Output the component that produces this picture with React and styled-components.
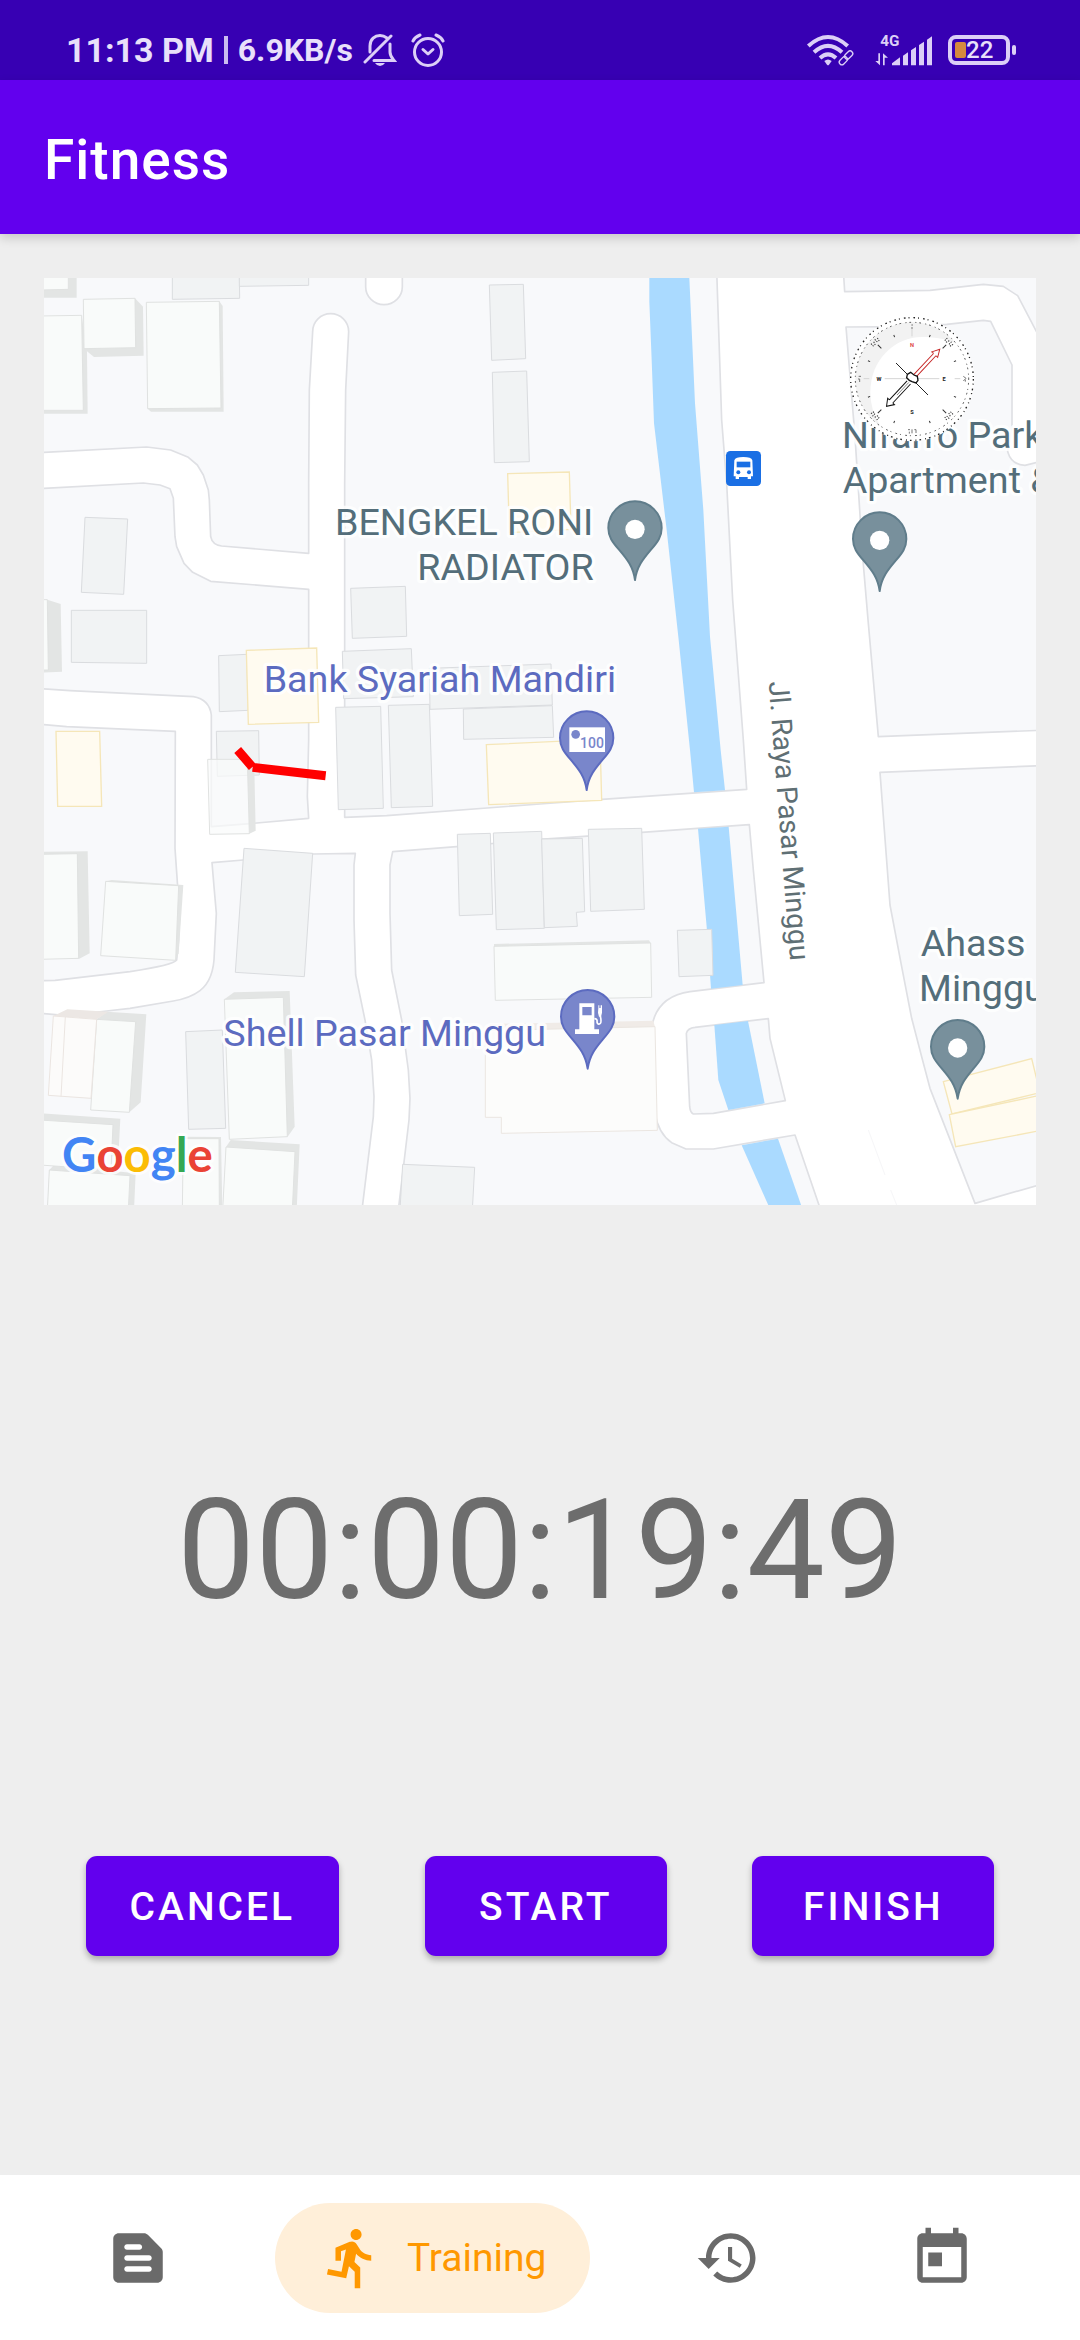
import React from "react";
import styled, { createGlobalStyle } from "styled-components";

const GlobalStyle = createGlobalStyle`
  *, *::before, *::after { box-sizing: border-box; }
  body {
    margin: 0;
    background: #eeeeee;
    font-family: Roboto, "Liberation Sans", sans-serif;
  }
`;

const Screen = styled.div`
  display: flex;
  flex-direction: column;
  min-height: 100vh;
`;

const StatusBar = styled.div`
  display: flex;
  justify-content: space-between;
  align-items: center;
  height: 80px;
  padding: 20px 64px 0 66px;
  background: #3700b3;
  color: #e9e0fa;
`;

const StatusGroup = styled.div`
  display: flex;
  align-items: center;
  gap: ${(p) => p.$gap}px;
`;

const Clock = styled.span`
  font-size: 34px;
  line-height: 40px;
  font-weight: 700;
`;

const Speed = styled.span`
  font-size: 32px;
  line-height: 40px;
  font-weight: 700;
`;

const Divider = styled.span`
  width: 4px;
  height: 28px;
  background: #cbbcf0;
`;

const StatusIcon = styled.svg`
  display: block;
  width: ${(p) => p.$w}px;
  height: ${(p) => p.$h}px;
  color: #dccff7;
  font-family: Roboto, sans-serif;
`;

const Battery = styled.div`
  display: flex;
  align-items: center;
  gap: 2px;
`;

const BatteryShell = styled.div`
  display: flex;
  align-items: center;
  width: 62px;
  height: 30px;
  padding-left: 3px;
  border: 4px solid #dccff7;
  border-radius: 8px;
  font-size: 24px;
  line-height: 24px;
  font-weight: 500;
`;

const BatteryLevel = styled.span`
  width: 11px;
  height: 16px;
  border-radius: 2px;
  background: #d58a3e;
`;

const BatteryTip = styled.span`
  width: 4px;
  height: 10px;
  border-radius: 2px;
  background: #dccff7;
`;

const AppBar = styled.header`
  display: flex;
  align-items: center;
  height: 154px;
  padding: 6px 44px 0;
  background: #6200ee;
  color: #ffffff;
  box-shadow: 0 4px 10px rgba(0, 0, 0, 0.16);
`;

const Title = styled.h1`
  margin: 0;
  font-size: 55px;
  line-height: 64px;
  font-weight: 500;
  letter-spacing: 1px;
`;

const Main = styled.main`
  flex: 1;
  display: flex;
  flex-direction: column;
  padding: 44px 0;
`;

const MapView = styled.section`
  margin: 0 44px;
`;

const MapCanvas = styled.svg`
  display: block;
  width: 100%;
  height: auto;
  font-family: Roboto, "Liberation Sans", sans-serif;
`;

const Timer = styled.div`
  margin-top: 265px;
  text-align: center;
  font-size: 139px;
  line-height: 162px;
  color: #6d6d6d;
`;

const Actions = styled.div`
  display: flex;
  justify-content: space-evenly;
  margin-top: 224px;
`;

const ActionButton = styled.button`
  min-width: 242px;
  height: 100px;
  padding: 2px 44px 0;
  border: 0;
  border-radius: 11px;
  background: #6200ee;
  color: #ffffff;
  font: 500 39px/44px Roboto, "Liberation Sans", sans-serif;
  letter-spacing: 3px;
  box-shadow: 0 4px 6px rgba(0, 0, 0, 0.28);
`;

const BottomNav = styled.nav`
  display: flex;
  justify-content: space-evenly;
  align-items: center;
  height: 165px;
  background: #ffffff;
`;

const NavItem = styled.a`
  display: flex;
  align-items: center;
  gap: 22px;
  height: 110px;
  padding: 0 44px;
  border-radius: 55px;
  background: ${(p) => (p.$active ? "#ffefd9" : "transparent")};
  color: ${(p) => (p.$active ? "#ff9800" : "#6a6a6a")};
  font-size: 39px;
  line-height: 44px;
  text-decoration: none;
`;

const NavIcon = styled.svg`
  display: block;
  width: 66px;
  height: 66px;
  fill: currentColor;
`;

/* Map geometry, three units to a screen pixel. */

const land = [
  "M0 548 L320 531 L392 540 L445 562 L472 585 L490 615 L505 660 L508 690 L512 800 Q517 825 545 828 L806 850 V640 L808 360 L818 185 A54 54 0 0 1 926 185 L917 360 L914 640 V1642 L1040 1637 L1500 1602 L1686 1588 L2120 1558 L2110 1410 L2078 990 L2060 640 L2045 450 L2030 0 H1087 V50 A55 54 0 0 1 977 50 V0 H0Z",
  "M0 656 L310 639 L360 645 L390 656 L400 685 L405 800 L410 830 L432 880 L458 907 L512 934 L806 958 V1410 L802 1580 L806 1645 L640 1660 L514 1670 V1335 Q508 1288 460 1280 L90 1262 L0 1256Z",
  "M0 1363 L80 1370 L406 1384 L405 1735 L413 1850 Q424 1960 410 2070 Q400 2085 270 2105 L45 2131 L0 2132Z",
  "M516 1778 L610 1770 L820 1752 L946 1750 L942 1785 V1950 L947 2115 L975 2250 L995 2370 L1002 2480 L1000 2540 L966 2820 H0 V2230 L80 2237 L200 2223 L270 2215 L400 2193 Q450 2185 480 2162 Q522 2130 523 2050 L529 1930 L522 1850Z",
  "M1058 1745 L1050 1785 V1930 L1055 2100 L1085 2250 L1105 2400 L1110 2485 L1107 2550 L1075 2820 H2342 L2265 2595 L2020 2637 H1938 L1895 2618 Q1855 2590 1845 2530 L1835 2390 L1832 2290 Q1842 2180 1950 2165 L2172 2138 L2140 1800 L2128 1664 L1806 1687 L1500 1708 L1250 1730Z",
  "M1939 2290 Q1943 2274 1965 2272 L2185 2246 L2190 2305 L2236 2492 L2020 2530 L1960 2532 Q1951 2528 1949 2510Z",
  "M2410 0 L2414 65 L2670 61 L2830 43 L2890 49 L2933 77 L3000 205 V0Z",
  "M2418 171 L2600 170 L2720 163 L2830 151 L2852 154 L2916 285 V470 L2903 545 Q2915 585 2955 586 L3000 575 V1381 L2515 1400 L2485 1060 L2468 860 L2445 500Z",
  "M2520 1507 L3000 1487 V2744 L2805 2800 L2670 2455 L2645 2360 L2615 2245 L2585 2090 L2550 1905Z",
];

const water = [
  "1828,24 1828,95 1835,270 1842,460 1880,780 1915,1100 1950,1440 1962,1567 2055,1561 2042,1440 2010,1100 1990,720 1965,400 1948,24",
  "1974,1676 2066,1670 2108,2145 2013,2156 2000,1970",
  "2023,2265 2124,2253 2174,2500 2065,2520 2035,2430",
  "2105,2626 2214,2606 2285,2810 2187,2810",
];

const flatBuildings = [
  "397,0 598,0 599,85 397,88",
  "598,0 806,0 806,46 598,49",
  "1348,45 1450,43 1457,266 1355,271",
  "1357,307 1460,303 1468,575 1363,578",
  "135,742 263,747 251,973 124,967",
  "94,1021 320,1021 320,1180 94,1177",
  "932,955 1096,949 1100,1099 937,1105",
  "536,1157 620,1153 625,1321 538,1325",
  "907,1144 1114,1136 1120,1280 911,1286",
  "1168,1195 1533,1182 1537,1305 1170,1318",
  "1270,1317 1537,1307 1541,1402 1271,1408",
  "887,1312 1022,1309 1030,1615 895,1619",
  "1045,1306 1168,1303 1178,1609 1054,1613",
  "529,1384 656,1382 658,1515 532,1519",
  "612,1735 818,1750 793,2120 586,2107",
  "437,2285 547,2280 557,2575 446,2578",
  "1252,1693 1351,1690 1358,1933 1258,1937",
  "1360,1689 1505,1684 1513,1975 1369,1979",
  "1505,1707 1627,1705 1634,1925 1609,1927 1612,1969 1513,1973",
  "1645,1678 1805,1675 1813,1918 1652,1924",
  "1912,1981 2015,1978 2019,2116 1917,2120",
  "1088,2683 1304,2692 1297,2820 1080,2820",
];

const shops = [
  "619,1141 830,1134 836,1357 625,1363",
  "1403,611 1588,606 1593,778 1408,788",
  "48,1384 179,1384 185,1609 53,1609",
  "1339,1424 1680,1408 1685,1591 1346,1604",
  "2710,2435 2975,2366 3000,2468 2736,2532",
  "2728,2534 3000,2476 3000,2582 2747,2630",
];

const walls = [
  "0,0 110,0 110,83 0,83",
  "285,85 309,110 311,257 162,261 132,236",
  "538,94 548,108 551,425 333,425 323,416",
  "125,136 141,245 143,431 0,431 0,421",
  "22,989 62,1002 66,1205 0,1208",
  "0,1745 143,1744 149,2050 118,2066 0,2060",
  "197,1834 215,1830 430,1845 416,2050 407,2071",
  "553,2188 582,2167 749,2163 764,2570 743,2600",
  "170,2248 200,2225 319,2233 302,2497 268,2527",
  "0,2530 241,2546 235,2660 0,2640",
  "28,2700 42,2685 287,2710 282,2820 22,2820",
  "430,2600 543,2601 547,2820 427,2820",
  "558,2631 572,2610 779,2623 770,2820 548,2820",
  "1362,2022 1827,2011 1832,2019 1362,2032",
];

const roofs = [
  "0,0 85,0 85,58 0,60",
  "130,88 285,85 287,233 132,236",
  "0,138 125,136 130,421 0,421",
  "319,97 538,94 543,414 323,416",
  "0,989 22,989 25,1200 0,1200",
  "0,1753 112,1751 116,2065 0,2068",
  "197,1834 416,1847 407,2071 182,2057",
  "553,2188 730,2182 742,2600 568,2608",
  "170,2248 287,2255 268,2527 152,2520",
  "0,2550 219,2564 213,2700 0,2685",
  "28,2700 270,2717 265,2820 22,2820",
  "430,2606 537,2606 538,2820 427,2820",
  "558,2631 765,2645 757,2820 548,2820",
  "1362,2029 1832,2019 1835,2182 1366,2191",
];

const GREY = { fill: "#78909c", stroke: "#607d8b" };
const VIOLET = { fill: "#7986cb", stroke: "#5c6bc0" };

function Pin({ x, y, tone, children }) {
  return (
    <g transform={`translate(${x} ${y})`}>
      <path
        d="M0 -2 C-6 -45 -27 -68 -48 -93 C-68 -116 -80 -132 -80 -158 A80 80 0 1 1 80 -158 C80 -132 68 -116 48 -93 C27 -68 6 -45 0 -2Z"
        fill={tone.fill}
        stroke={tone.stroke}
        strokeWidth="6"
        strokeLinejoin="round"
      />
      {children || <circle cx="0" cy="-154" r="29" fill="#fff" />}
    </g>
  );
}

function Label({ x, y, color, children }) {
  return (
    <text
      x={x}
      y={y}
      fontSize="113"
      fill={color}
      stroke="#fff"
      strokeOpacity="0.85"
      strokeWidth="20"
      strokeLinejoin="round"
      paintOrder="stroke"
    >
      {children}
    </text>
  );
}

function Compass() {
  const ticks = [22.5, 67.5, 112.5, 157.5, 202.5, 247.5, 292.5, 337.5];
  return (
    <g transform="translate(2616 327)" fill="none">
      <circle r="187" fill="#fff" />
      <circle r="170" fill="#f2f2f2" />
      <path
        d="M-125 40 C-125 -60 -50 -126 30 -126 C70 -126 110 -120 135 -104 A170 170 0 0 1 -95 141 Q-125 95 -125 40Z"
        fill="#fff"
      />
      <circle r="184" stroke="#222" strokeWidth="4" strokeDasharray="5 9 3 12" />
      <circle r="170" stroke="#444" strokeWidth="3" strokeDasharray="3 9 5 13" />
      <path d="M-82 -1 H82 M-145 -1 H-128 M128 -1 H145 M0 -150 V-128" stroke="#d5d5d5" strokeWidth="3" />
      {ticks.map((a) => (
        <path key={a} d="M0 -143 V-136" transform={`rotate(${a})`} stroke="#333" strokeWidth="3" />
      ))}
      {[45, 135, 225, 315].map((a) => (
        <g key={a} transform={`rotate(${a})`} stroke="#333" strokeWidth="3">
          <path d="M0 -145 V-130" />
          <path d="M-12 -162 V-148 M-6 -150 L-1 -163 M5 -163 V-149 M11 -150 L14 -162" strokeDasharray="4 3" />
        </g>
      ))}
      <path d="M-48 -48 L48 48" stroke="#222" strokeWidth="3" />
      <g transform="rotate(43)">
        <path d="M-5 -12 V-100 M5 -12 V-100 M-5 -100 H-12 L0 -122 L12 -100 H5" stroke="#c62828" strokeWidth="3" />
        <path d="M-7 14 V92 M7 14 V92 M-7 92 H-14 L0 112 L14 92 H7" stroke="#111" strokeWidth="3" />
        <path d="M0 14 V66" stroke="#555" strokeWidth="2" />
      </g>
      <path d="M-14 -14 L-4 -20 L6 -12 L16 -8 L18 4 L12 12 L0 8 L-8 4 L-16 -4Z" stroke="#111" strokeWidth="4" fill="#fff" />
      <g fontSize="17" fontWeight="700" textAnchor="middle" fill="#222">
        <text x="0" y="-96" fill="#d44">N</text>
        <text x="-99" y="6">W</text>
        <text x="96" y="6">E</text>
        <text x="0" y="105">S</text>
      </g>
      <path d="M-12 152 h6 M-8 158 v6 M0 151 v12 M7 152 h5 v10 M-160 -8 h7 M-162 0 h5 v9 M154 -8 l8 6 l-8 8 M160 2 v6 M-2 -162 h5 M0 -156 v6" stroke="#777" strokeWidth="3" />
    </g>
  );
}

function CityMap() {
  const slate = "#546e7a";
  const indigo = "#5c6bc0";
  return (
    <MapCanvas viewBox="12 24 2976 2781" role="img" aria-label="Map of the training route">
      <rect x="0" y="0" width="3000" height="2820" fill="#fff" />
      <g fill="#f8f9fb" stroke="#dfe0e4" strokeWidth="5" strokeLinejoin="round">
        {land.map((d) => (
          <path key={d} d={d} />
        ))}
      </g>
      <g fill="#aadaff">
        {water.map((p) => (
          <polygon key={p} points={p} />
        ))}
      </g>
      <path d="M2485 2580 L2535 2715 M2552 2760 L2570 2805" stroke="#f6f6f8" strokeWidth="3" />
      <g fill="#f1f3f4" stroke="#dadcdf" strokeWidth="3">
        {flatBuildings.map((p) => (
          <polygon key={p} points={p} />
        ))}
      </g>
      <g fill="#e3e5e4">
        {walls.map((p) => (
          <polygon key={p} points={p} />
        ))}
      </g>
      <g fill="#f9fbfa" stroke="#e0e2e1" strokeWidth="3">
        {roofs.map((p) => (
          <polygon key={p} points={p} />
        ))}
      </g>
      <polygon points="40,2238 82,2218 205,2225 170,2248" fill="#ece7e4" />
      <polygon points="40,2238 170,2248 153,2485 25,2476" fill="#fcfbfa" stroke="#ebe5e1" strokeWidth="3" />
      <path d="M76 2240 L63 2480" stroke="#ebe5e1" strokeWidth="3" />
      <polygon points="1350,2262 1840,2252 1845,2272 1345,2282" fill="#f0ebe7" />
      <polygon
        points="1336,2282 1845,2270 1852,2581 1384,2590 1384,2542 1336,2542"
        fill="#fcfcfb"
        stroke="#ebe6e1"
        strokeWidth="3"
      />
      <g fill="#fffbf0" stroke="#f5e6b8" strokeWidth="4">
        {shops.map((p) => (
          <polygon key={p} points={p} />
        ))}
      </g>
      <polygon points="622,1490 643,1495 647,1682 628,1691" fill="#e3e5e4" />
      <polygon points="503,1468 622,1468 628,1691 509,1693" fill="#fafbfb" fillOpacity="0.7" stroke="#e0e2e1" strokeWidth="3" />

      <path d="M593 1440 L637 1491 M638 1492 L857 1517" stroke="#ff0000" strokeWidth="27" />

      <rect x="2058" y="543" width="105" height="105" rx="13" fill="#1a6fe4" />
      <g transform="translate(2110 595)">
        <path d="M-27 -24 Q-24 -34 0 -34 Q24 -34 27 -24 L29 24 H23 V32 H13 V26 H-13 V32 H-23 V24 H-29Z" fill="#fff" />
        <path d="M-20 -20 H21 V-3 H-20Z" fill="#1a6fe4" />
        <circle cx="-15" cy="12" r="6" fill="#1a6fe4" />
        <circle cx="17" cy="12" r="6" fill="#1a6fe4" />
      </g>

      <Label x="885" y="795" color={slate}>BENGKEL RONI</Label>
      <Label x="1132" y="930" color={slate}>RADIATOR</Label>
      <Label x="671" y="1266" color={indigo}>Bank Syariah Mandiri</Label>
      <Label x="550" y="2328" color={indigo}>Shell Pasar Minggu</Label>
      <Label x="2406" y="535" color={slate}>Nifarro Park</Label>
      <Label x="2408" y="668" color={slate}>Apartment &amp;</Label>
      <Label x="2642" y="2058" color={slate}>Ahass</Label>
      <Label x="2637" y="2193" color={slate}>Minggu</Label>
      <text transform="translate(2186 1236) rotate(85.6)" fontSize="85" fill="#5f6f74">
        Jl. Raya Pasar Minggu
      </text>

      <Pin x={1785} y={932} tone={GREY} />
      <Pin x={2519} y={965} tone={GREY} />
      <Pin x={2753} y={2488} tone={GREY} />
      <Pin x={1640} y={1562} tone={VIOLET}>
        <rect x="-52" y="-190" width="107" height="74" fill="#fff" />
        <circle cx="-33" cy="-169" r="13" fill="#7986cb" />
        <text x="-20" y="-129" fontSize="42" fontWeight="500" fill="#7986cb">100</text>
      </Pin>
      <Pin x={1643} y={2398} tone={VIOLET}>
        <path
          fillRule="evenodd"
          d="M-25 -198 H20 V-120 H34 V-106 H-38 V-120 H-25Z M-16 -187 V-162 H12 V-187Z"
          fill="#fff"
        />
        <path d="M20 -152 Q30 -152 28 -142 Q30 -132 38 -138 Q42 -142 38 -160" fill="none" stroke="#fff" strokeWidth="5" />
        <path d="M32 -184 V-192 H35 V-184 H39 V-192 H43 V-170 L40 -158 H34 L31 -170Z" fill="#fff" />
      </Pin>

      <text
        x="66"
        y="2707"
        fontFamily='Lato, "Open Sans", sans-serif'
        fontSize="142"
        fontWeight="700"
        stroke="#fff"
        strokeOpacity="0.8"
        strokeWidth="18"
        strokeLinejoin="round"
        paintOrder="stroke"
      >
        <tspan fill="#4285f4">G</tspan>
        <tspan fill="#ea4335">o</tspan>
        <tspan fill="#fbbc05">o</tspan>
        <tspan fill="#4285f4">g</tspan>
        <tspan fill="#34a853">l</tspan>
        <tspan fill="#ea4335">e</tspan>
      </text>
      <Compass />
    </MapCanvas>
  );
}

function SilentIcon() {
  return (
    <StatusIcon $w={34} $h={34} viewBox="0 0 34 34" fill="none" stroke="currentColor" strokeWidth="3" strokeLinecap="round" aria-hidden="true">
      <path d="M2 29 L28 3" />
      <path d="M7 19 V13 C7 6 12 2.500 17 2.500 C20 2.500 22 3.500 24 5" />
      <path d="M27 11 V19 C27 23 29 25 31 27.500 H11" />
      <path d="M12 30 H22 Q20 33 17 33 Q14 33 12 30Z" fill="currentColor" stroke="none" />
    </StatusIcon>
  );
}

function AlarmIcon() {
  return (
    <StatusIcon $w={34} $h={34} viewBox="0 0 34 34" fill="none" stroke="currentColor" strokeWidth="3" strokeLinecap="round" strokeLinejoin="round" aria-hidden="true">
      <circle cx="17" cy="19" r="13.500" />
      <path d="M12 16.500 L17 21 L22 16.500" />
      <path d="M2 8 Q4 4 9 2 M32 8 Q30 4 25 2" />
    </StatusIcon>
  );
}

function WifiIcon() {
  return (
    <StatusIcon $w={50} $h={35} viewBox="318 97 150 105" fill="none" stroke="currentColor" strokeWidth="12" aria-hidden="true">
      <path d="M325 136 Q384 82 443 136 M342 155 Q384 116 426 155" />
      <path d="M360 172 Q384 150 408 172" />
      <path d="M373 181 Q384 172 395 181 L387 192 Q384 195 381 192Z" fill="currentColor" stroke="none" />
      <g strokeWidth="4">
        <rect x="-14" y="-8" width="28" height="16" rx="8" transform="translate(430 180) rotate(-45)" />
        <rect x="-14" y="-8" width="28" height="16" rx="8" transform="translate(446 163) rotate(-45)" />
      </g>
    </StatusIcon>
  );
}

function MobileIcon() {
  return (
    <StatusIcon $w={60} $h={35} viewBox="516 92 180 105" fill="currentColor" role="img" aria-label="4G signal">
      <text x="541" y="132" fontSize="46" fontWeight="700">4G</text>
      <path d="M535 153 h5 v36 l-14 -13 h9Z M549 189 v-36 l15 13 h-10 v23Z" />
      <path d="M576 189 V183 L600 165 V189Z M609 189 V160 L624 150 V189Z M633 189 V144 L648 134 V189Z M657 189 V128 L672 118 V189Z M681 189 V112 L696 102 V189Z" />
    </StatusIcon>
  );
}

const navItems = [
  {
    id: "news",
    label: "News",
    path: "M14.170 3H5c-1.100 0-2 .9-2 2v14c0 1.100.9 2 2 2h14c1.100 0 2-.9 2-2V9.830c0-.53-.21-1.040-.59-1.410l-4.830-4.830c-.37-.38-.88-.59-1.410-.59zM8 7h4.500c.55 0 1 .45 1 1s-.45 1-1 1H8c-.55 0-1-.45-1-1s.45-1 1-1zm8 10H8c-.55 0-1-.45-1-1s.45-1 1-1h8c.55 0 1 .45 1 1s-.45 1-1 1zm0-4H8c-.55 0-1-.45-1-1s.45-1 1-1h8c.55 0 1 .45 1 1s-.45 1-1 1z",
  },
  {
    id: "training",
    label: "Training",
    active: true,
    path: "M13.490 5.480c1.100 0 2-.9 2-2s-.9-2-2-2-2 .9-2 2 .9 2 2 2zm-3.600 13.900l1-4.400 2.100 2v6h2v-7.500l-2.100-2 .6-3c1.300 1.500 3.300 2.500 5.500 2.500v-2c-1.900 0-3.500-1-4.300-2.400l-1-1.600c-.4-.6-1-1-1.700-1-.3 0-.5.1-.8.1l-5.200 2.200v4.700h2v-3.400l1.800-.7-1.600 8.100-4.900-1-.4 2 7 1.400z",
  },
  {
    id: "history",
    label: "History",
    path: "M13 3c-4.970 0-9 4.030-9 9H1l3.890 3.890.07.14L9 12H6c0-3.870 3.130-7 7-7s7 3.130 7 7-3.130 7-7 7c-1.930 0-3.680-.79-4.940-2.060l-1.420 1.420C8.270 19.990 10.510 21 13 21c4.970 0 9-4.030 9-9s-4.030-9-9-9zm-1 5v5l4.280 2.540.72-1.210-3.500-2.080V8H12z",
  },
  {
    id: "schedule",
    label: "Schedule",
    path: "M19 3h-1V1h-2v2H8V1H6v2H5c-1.110 0-1.990.9-1.990 2L3 19c0 1.100.89 2 2 2h14c1.100 0 2-.9 2-2V5c0-1.100-.9-2-2-2zm0 16H5V8h14v11zM7 10h5v5H7z",
  },
];

export default function App() {
  return (
    <Screen>
      <GlobalStyle />
      <StatusBar>
        <StatusGroup $gap={10}>
          <Clock>11:13 PM</Clock>
          <Divider />
          <Speed>6.9KB/s</Speed>
          <StatusGroup $gap={14}>
            <SilentIcon />
            <AlarmIcon />
          </StatusGroup>
        </StatusGroup>
        <StatusGroup $gap={16}>
          <WifiIcon />
          <MobileIcon />
          <Battery>
            <BatteryShell>
              <BatteryLevel />
              22
            </BatteryShell>
            <BatteryTip />
          </Battery>
        </StatusGroup>
      </StatusBar>
      <AppBar>
        <Title>Fitness</Title>
      </AppBar>
      <Main>
        <MapView>
          <CityMap />
        </MapView>
        <Timer role="timer">00:00:19:49</Timer>
        <Actions>
          <ActionButton type="button">CANCEL</ActionButton>
          <ActionButton type="button">START</ActionButton>
          <ActionButton type="button">FINISH</ActionButton>
        </Actions>
      </Main>
      <BottomNav>
        {navItems.map((item) => (
          <NavItem key={item.id} href={`#${item.id}`} $active={item.active} aria-label={item.label}>
            <NavIcon viewBox="0 0 24 24" aria-hidden="true">
              <path d={item.path} />
            </NavIcon>
            {item.active && item.label}
          </NavItem>
        ))}
      </BottomNav>
    </Screen>
  );
}
